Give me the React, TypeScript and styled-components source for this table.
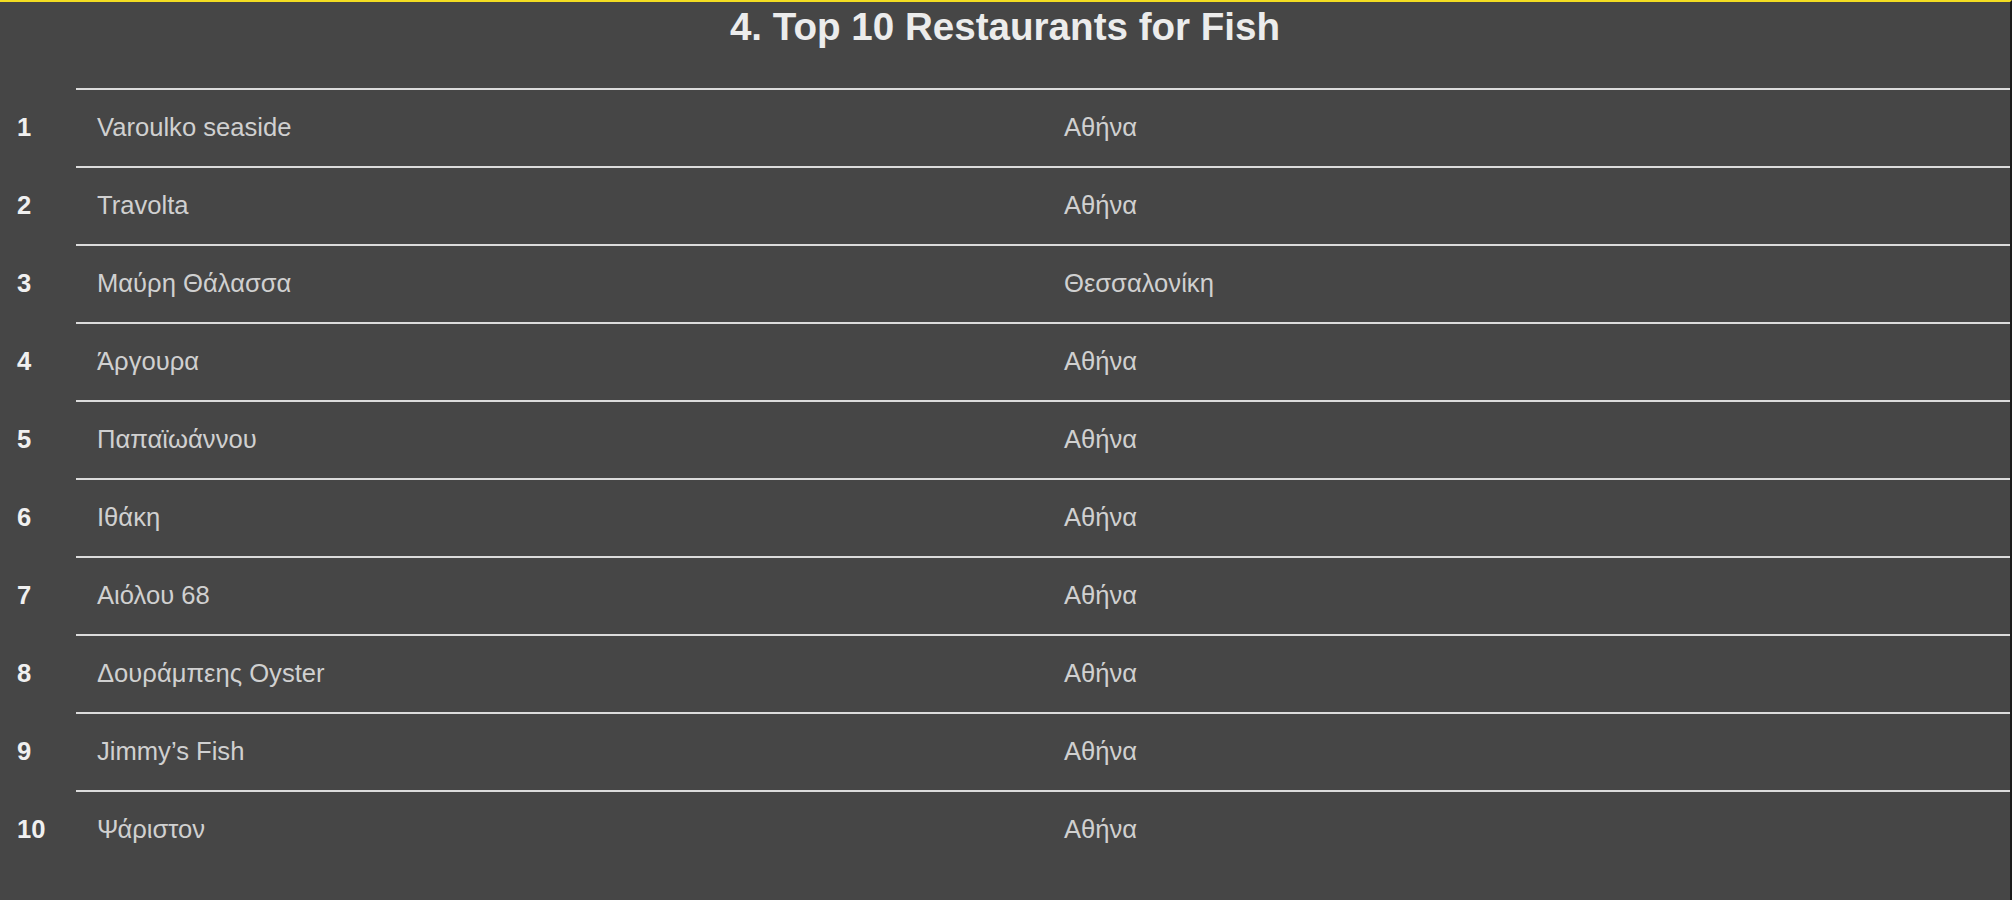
import styled, { createGlobalStyle } from "styled-components";

const RESTAURANTS = [
  { name: "Varoulko seaside", city: "Αθήνα" },
  { name: "Travolta", city: "Αθήνα" },
  { name: "Μαύρη Θάλασσα", city: "Θεσσαλονίκη" },
  { name: "Άργουρα", city: "Αθήνα" },
  { name: "Παπαϊωάννου", city: "Αθήνα" },
  { name: "Ιθάκη", city: "Αθήνα" },
  { name: "Αιόλου 68", city: "Αθήνα" },
  { name: "Δουράμπεης Oyster", city: "Αθήνα" },
  { name: "Jimmy’s Fish", city: "Αθήνα" },
  { name: "Ψάριστον", city: "Αθήνα" },
];

const GlobalStyle = createGlobalStyle`
  html, body {
    margin: 0;
    padding: 0;
    background-color: #464646;
  }

  body {
    font-family: "Liberation Sans", Arial, "Noto Sans", sans-serif;
  }
`;

const Page = styled.div`
  display: flex;
  flex-direction: column;
  min-height: 900px;
  box-sizing: border-box;
  border-top: 2px solid #f3dd22;
  border-right: 2px solid #1d1d1d;
  background-color: #464646;
`;

const Title = styled.h1`
  margin: 0;
  height: 86px;
  box-sizing: border-box;
  padding-top: 3px;
  font-size: 38.6px;
  line-height: 44px;
  font-weight: 700;
  text-align: center;
  color: #ececec;
`;

const List = styled.ol`
  list-style: none;
  margin: 0;
  padding: 0;
`;

const Row = styled.li`
  display: grid;
  grid-template-columns: 76px 1fr;
  font-size: 25.6px;
  line-height: 74px;
`;

const Rank = styled.span`
  padding: 2px 0 2px 17px;
  font-weight: 700;
  color: #f0f0f0;
`;

const Cells = styled.div`
  display: grid;
  grid-template-columns: 1fr 1fr;
  border-top: 2px solid #dcdcdc;
`;

const Cell = styled.span`
  padding: 0 0 2px 21px;
  color: #d0d0d0;
`;

export default function App() {
  return (
    <>
      <GlobalStyle />
      <Page>
        <Title>4. Top 10 Restaurants for Fish</Title>
        <List>
          {RESTAURANTS.map((item, index) => (
            <Row key={item.name}>
              <Rank>{index + 1}</Rank>
              <Cells>
                <Cell>{item.name}</Cell>
                <Cell>{item.city}</Cell>
              </Cells>
            </Row>
          ))}
        </List>
      </Page>
    </>
  );
}
